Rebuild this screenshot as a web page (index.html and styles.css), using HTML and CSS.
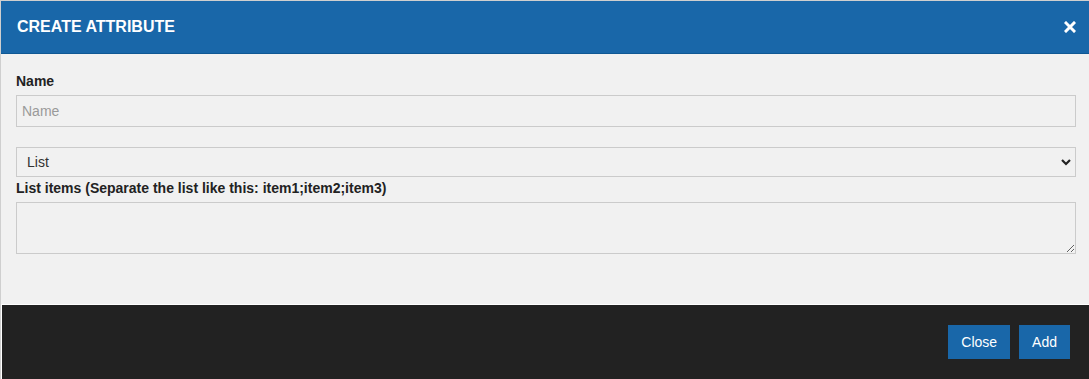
FILE: index.html
```html
<!DOCTYPE html>
<html lang="en">

<head>
    <title>Create Attribute</title>
    <link rel="stylesheet" href="styles.css">
</head>

<body>
    <div class="modal">
        <div class="modal-header">
            <span class="modal-title">CREATE ATTRIBUTE</span>
            <button class="close-x" aria-label="Close">
                <svg width="12" height="12" viewBox="0 0 12 12">
                    <path d="M2 2 L10 10 M10 2 L2 10" stroke="#fff" stroke-width="3" stroke-linecap="square" fill="none"/>
                </svg>
            </button>
        </div>

        <div class="modal-body">
            <label class="field-label" for="attrName">Name</label>
            <input class="field-input" id="attrName" type="text" placeholder="Name">

            <div class="select-wrap">
                <select class="field-select" id="attrType">
                    <option value="list">List</option>
                    <option value="text">Text</option>
                    <option value="number">Number</option>
                </select>
                <svg class="select-arrow" width="10" height="7" viewBox="0 0 10 7">
                    <path d="M1 1 L5 5 L9 1" stroke="#222" stroke-width="2.2" fill="none"/>
                </svg>
            </div>

            <label class="field-label list-label" for="listItems">List items (Separate the list like this: item1;item2;item3)</label>
            <textarea class="field-textarea" id="listItems"></textarea>
        </div>

        <div class="modal-footer">
            <button class="btn" id="closeButton">Close</button>
            <button class="btn" id="addButton">Add</button>
        </div>
    </div>
</body>

</html>
```

FILE: styles.css
```css
html,
body {
    margin: 0;
    padding: 0;
    background: #f1f1f1;
}

body {
    font-family: "Liberation Sans", Arial, sans-serif;
    color: #222;
}

.modal {
    display: flex;
    flex-direction: column;
    height: 379px;
    box-sizing: border-box;
    border-top: 1px solid #cfcfcf;
    border-left: 1px solid #cfcfcf;
}

.modal-header {
    display: flex;
    align-items: center;
    justify-content: space-between;
    height: 52px;
    padding: 0 13px 0 16px;
    background-color: #1967a9;
    border-bottom: 1px solid #0f5894;
}

.modal-title {
    color: #fff;
    font-size: 16px;
    font-weight: 700;
}

.close-x {
    display: flex;
    padding: 0;
    background: none;
    border: none;
    cursor: pointer;
}

.modal-body {
    flex: 1;
    display: flex;
    flex-direction: column;
    padding: 19px 13px 0 15px;
}

.field-label {
    font-size: 14px;
    font-weight: 700;
    line-height: 16px;
    color: #222;
}

.field-input,
.field-select,
.field-textarea {
    width: 100%;
    box-sizing: border-box;
    background: #f1f1f1;
    border: 1px solid #cbcbcb;
    border-radius: 0;
    font-family: "Liberation Sans", Arial, sans-serif;
    font-size: 14px;
    color: #333;
    outline: none;
}

.field-input {
    height: 32px;
    margin-top: 6px;
    padding: 0 5px;
}

.field-input::placeholder {
    color: #9a9a9a;
}

.select-wrap {
    position: relative;
    margin-top: 20px;
}

.field-select {
    display: block;
    height: 30px;
    padding: 0 10px;
    appearance: none;
    -webkit-appearance: none;
}

.select-arrow {
    position: absolute;
    right: 5px;
    top: 12px;
    pointer-events: none;
}

.list-label {
    margin-top: 3px;
}

.field-textarea {
    display: block;
    height: 52px;
    margin-top: 6px;
    padding: 5px;
    resize: vertical;
}

.modal-footer {
    display: flex;
    align-items: center;
    justify-content: flex-end;
    gap: 9px;
    height: 74px;
    padding-right: 19px;
    background-color: #222;
    border-top: 1px solid #fff;
    border-left: 1px solid #fff;
}

.btn {
    height: 34px;
    padding: 0 13px;
    background-color: #1967a9;
    color: #fff;
    border: none;
    border-radius: 0;
    font-family: "Liberation Sans", Arial, sans-serif;
    font-size: 14px;
    cursor: pointer;
}
```
